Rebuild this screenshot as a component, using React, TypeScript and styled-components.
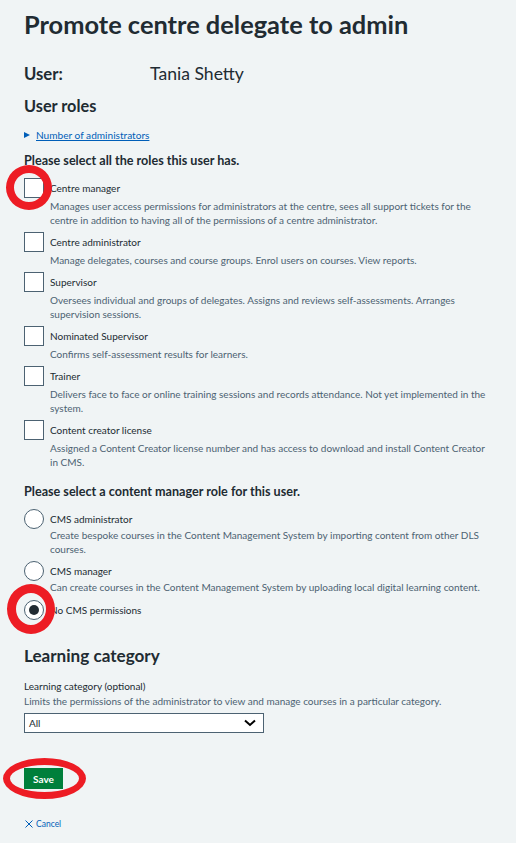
import React from "react";
import styled, { createGlobalStyle } from "styled-components";

const Global = createGlobalStyle`
  html, body { margin: 0; padding: 0; background: #f0f4f5; }
  body { font-family: Lato, "Noto Sans", sans-serif; color: #212b32; }
  * { box-sizing: border-box; }
`;

const Page = styled.main`
  padding: 8px 24px 16px 24px;
  min-height: 843px;
  display: flex;
  flex-direction: column;
`;

const Title = styled.h1`
  margin: 0;
  font-size: 25.4px;
  line-height: 32px;
  font-weight: 700;
`;

const UserRow = styled.div`
  display: grid;
  grid-template-columns: 126px auto;
  align-items: center;
  margin-top: 23px;
  height: 20px;
`;

const UserLabel = styled.span`
  font-size: 16.7px;
  font-weight: 700;
`;

const UserName = styled.span`
  font-size: 17.6px;
`;

const SubHeading = styled.h2<{ $mt: number }>`
  margin: ${(p) => p.$mt}px 0 0 0;
  font-size: 16.3px;
  line-height: 20px;
  font-weight: 700;
`;

const Details = styled.div`
  margin-top: 12px;
  display: flex;
  align-items: center;
  gap: 6px;
  height: 14px;
  font-size: 10.1px;
  color: #005eb8;
`;

const Triangle = styled.span`
  width: 0;
  height: 0;
  border-top: 3.5px solid transparent;
  border-bottom: 3.5px solid transparent;
  border-left: 6px solid #005eb8;
`;

const LinkText = styled.a`
  color: #005eb8;
  text-decoration: underline;
  text-underline-offset: 1px;
`;

const Legend = styled.div<{ $mt: number }>`
  margin-top: ${(p) => p.$mt}px;
  font-size: 12.6px;
  line-height: 16px;
  font-weight: 700;
`;

const OptionList = styled.div`
  display: flex;
  flex-direction: column;
  gap: 5px;
  margin-top: 9px;
`;

const Option = styled.div`
  position: relative;
  display: grid;
  grid-template-columns: 20px 1fr;
  column-gap: 6px;
`;

const CheckBox = styled.span`
  width: 20px;
  height: 20px;
  background: #ffffff;
  border: 1.5px solid #4c6272;
`;

const RadioCircle = styled.span<{ $checked?: boolean }>`
  width: 20px;
  height: 20px;
  border-radius: 50%;
  background: #ffffff;
  border: 1.5px solid #4c6272;
  display: flex;
  align-items: center;
  justify-content: center;
  &::after {
    content: "";
    display: ${(p) => (p.$checked ? "block" : "none")};
    width: 10px;
    height: 10px;
    border-radius: 50%;
    background: #212b32;
  }
`;

const OptionBody = styled.div`
  display: flex;
  flex-direction: column;
`;

const OptionLabel = styled.span`
  font-size: 10px;
  line-height: 20px;
  color: #212b32;
`;

const Hint = styled.span<{ $mt?: number; $lh?: number }>`
  margin-top: ${(p) => p.$mt ?? 1}px;
  font-size: 10px;
  line-height: ${(p) => p.$lh ?? 14}px;
  color: #4c6272;
`;

const Ring = styled.span<{ $l: number; $t: number; $w: number; $h: number; $b: number }>`
  position: absolute;
  left: ${(p) => p.$l}px;
  top: ${(p) => p.$t}px;
  width: ${(p) => p.$w}px;
  height: ${(p) => p.$h}px;
  border-radius: 50%;
  border: ${(p) => p.$b}px solid #ed1c24;
  pointer-events: none;
`;

const CategoryHeading = styled.h2`
  margin: 26.5px 0 0 0;
  font-size: 17.1px;
  line-height: 20px;
  font-weight: 700;
`;

const FieldLabel = styled.label`
  margin-top: 13px;
  font-size: 10px;
  line-height: 14px;
`;

const SelectBox = styled.div`
  margin-top: 5px;
  width: 240px;
  height: 20px;
  background: #ffffff;
  border: 1.5px solid #4c6272;
  display: flex;
  align-items: center;
  justify-content: space-between;
  padding: 0 7px 0 4px;
  font-size: 10px;
`;

const ButtonWrap = styled.div`
  position: relative;
  margin-top: 35px;
  align-self: flex-start;
`;

const SaveButton = styled.button`
  display: block;
  width: 39px;
  height: 21px;
  background: #007f3b;
  color: #ffffff;
  border: none;
  font-family: inherit;
  font-size: 10px;
  font-weight: 700;
  padding: 0;
`;

const Cancel = styled.a`
  margin-top: 30px;
  display: flex;
  align-items: center;
  gap: 3px;
  color: #005eb8;
  font-size: 8.5px;
  line-height: 10px;
  padding-left: 1px;
`;

type Item = { label: string; hint: string; ring?: boolean; checked?: boolean };

const roles: Item[] = [
  {
    label: "Centre manager",
    hint: "Manages user access permissions for administrators at the centre, sees all support tickets for the centre in addition to having all of the permissions of a centre administrator.",
    ring: true,
  },
  { label: "Centre administrator", hint: "Manage delegates, courses and course groups. Enrol users on courses. View reports." },
  {
    label: "Supervisor",
    hint: "Oversees individual and groups of delegates. Assigns and reviews self-assessments. Arranges supervision sessions.",
  },
  { label: "Nominated Supervisor", hint: "Confirms self-assessment results for learners." },
  {
    label: "Trainer",
    hint: "Delivers face to face or online training sessions and records attendance. Not yet implemented in the system.",
  },
  {
    label: "Content creator license",
    hint: "Assigned a Content Creator license number and has access to download and install Content Creator in CMS.",
  },
];

const cms: Item[] = [
  {
    label: "CMS administrator",
    hint: "Create bespoke courses in the Content Management System by importing content from other DLS courses.",
  },
  {
    label: "CMS manager",
    hint: "Can create courses in the Content Management System by uploading local digital learning content.",
  },
  { label: "No CMS permissions", hint: "", ring: true, checked: true },
];

export default function App() {
  return (
    <>
      <Global />
      <Page>
        <Title>Promote centre delegate to admin</Title>
        <UserRow>
          <UserLabel>User:</UserLabel>
          <UserName>Tania Shetty</UserName>
        </UserRow>
        <SubHeading $mt={13}>User roles</SubHeading>
        <Details>
          <Triangle />
          <LinkText>Number of administrators</LinkText>
        </Details>
        <Legend $mt={11}>Please select all the roles this user has.</Legend>
        <OptionList>
          {roles.map((r) => (
            <Option key={r.label}>
              <CheckBox />
              <OptionBody>
                <OptionLabel>{r.label}</OptionLabel>
                <Hint>{r.hint}</Hint>
              </OptionBody>
              {r.ring && <Ring $l={-18} $t={-13} $w={46} $h={45} $b={8} />}
            </Option>
          ))}
        </OptionList>
        <Legend $mt={15}>Please select a content manager role for this user.</Legend>
        <OptionList>
          {cms.map((r) => (
            <Option key={r.label}>
              <RadioCircle $checked={r.checked} />
              <OptionBody>
                <OptionLabel>{r.label}</OptionLabel>
                {r.hint && (
                  <Hint $mt={0} $lh={13.5}>
                    {r.hint}
                  </Hint>
                )}
              </OptionBody>
              {r.ring && <Ring $l={-17} $t={-16} $w={48} $h={50} $b={9} />}
            </Option>
          ))}
        </OptionList>
        <CategoryHeading>Learning category</CategoryHeading>
        <FieldLabel>Learning category (optional)</FieldLabel>
        <Hint $mt={1}>Limits the permissions of the administrator to view and manage courses in a particular category.</Hint>
        <SelectBox>
          <span>All</span>
          <svg width="12" height="8" viewBox="0 0 12 8">
            <path d="M1 1.5 L6 6 L11 1.5" fill="none" stroke="#000" strokeWidth="2" />
          </svg>
        </SelectBox>
        <ButtonWrap>
          <SaveButton>Save</SaveButton>
          <Ring $l={-21} $t={-10} $w={83} $h={41} $b={7} />
        </ButtonWrap>
        <Cancel>
          <svg width="8" height="8" viewBox="0 0 8 8">
            <path d="M0.5 0.5 L7.5 7.5 M7.5 0.5 L0.5 7.5" stroke="#005eb8" strokeWidth="1" />
          </svg>
          <span>Cancel</span>
        </Cancel>
      </Page>
    </>
  );
}
